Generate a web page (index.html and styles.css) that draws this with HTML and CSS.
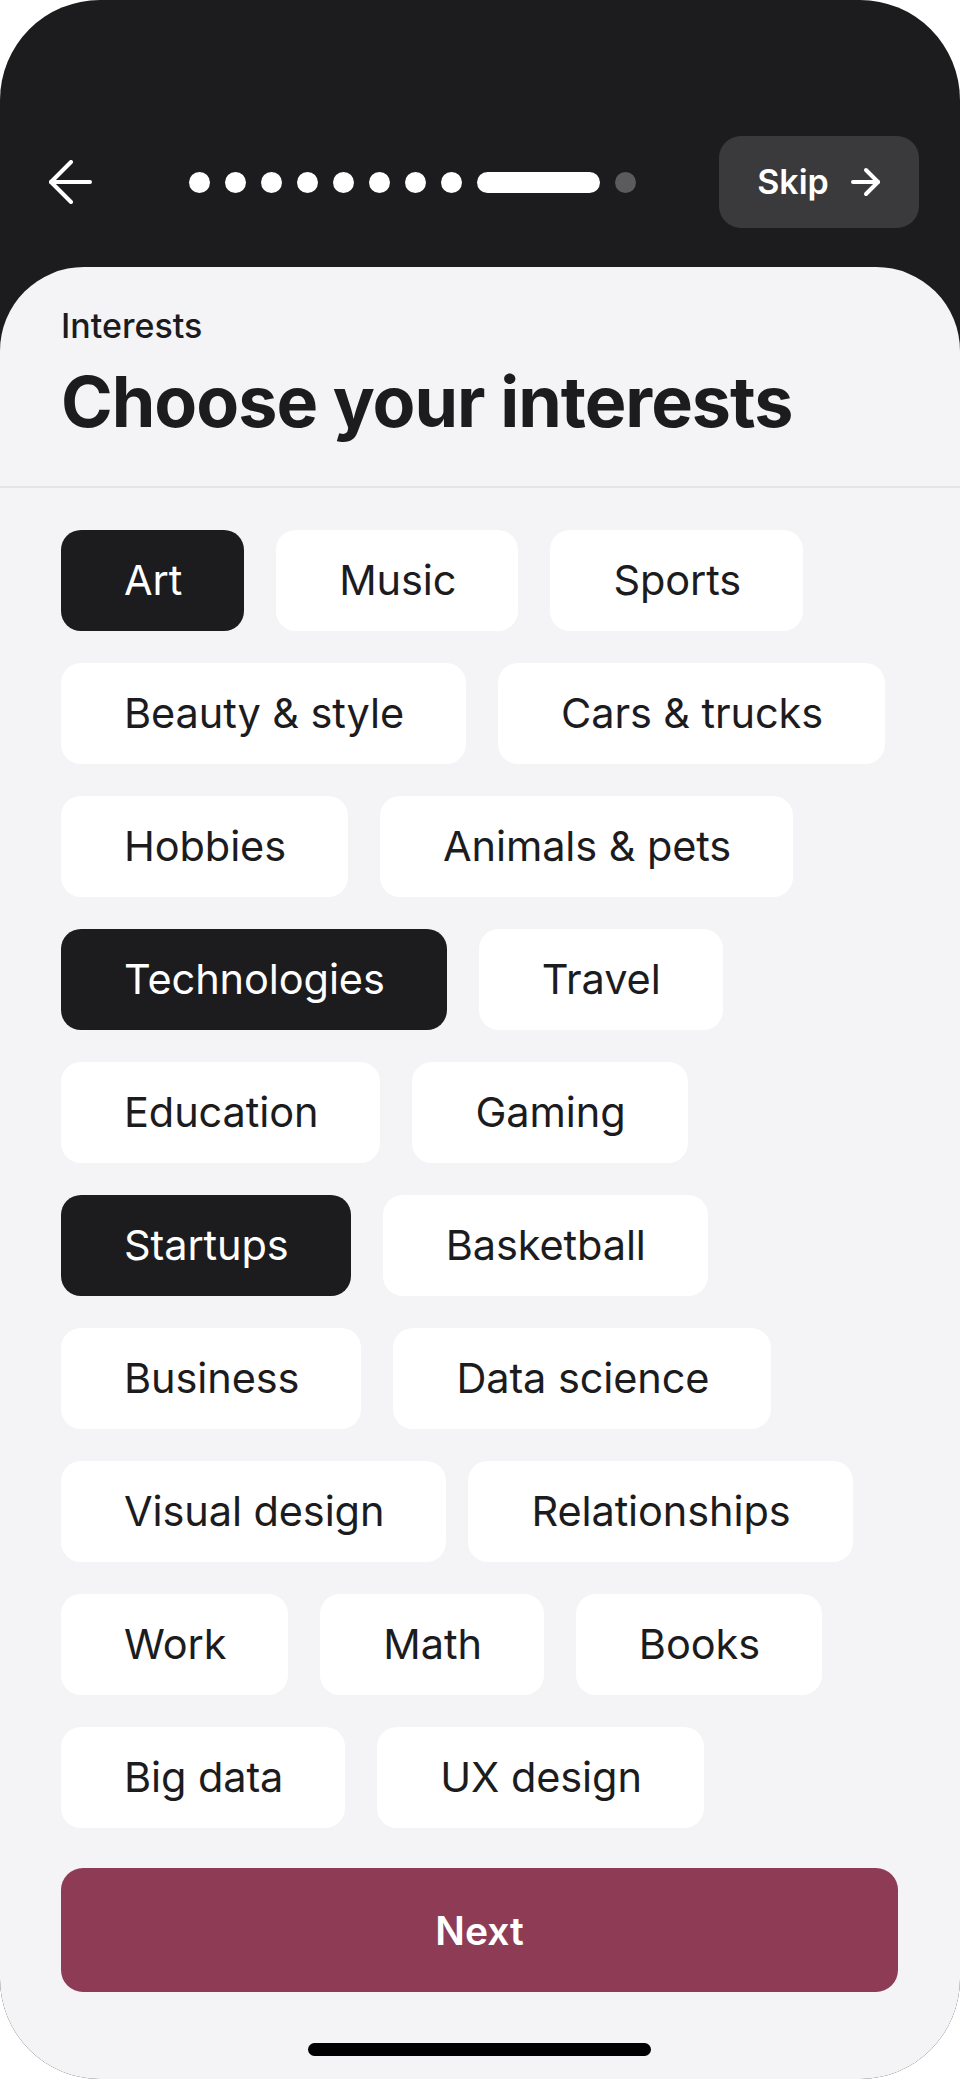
FILE: index.html
```html
<!DOCTYPE html>
<html lang="en">
<head>
<meta charset="utf-8">
<title>Choose your interests</title>
<link rel="stylesheet" href="styles.css">
</head>
<body>
<div class="phone">
  <header class="topbar">
    <button class="back" aria-label="Back">
      <svg width="44" height="44" viewBox="0 0 44 44" fill="none" stroke="#fff" stroke-width="4" stroke-linecap="round" stroke-linejoin="round">
        <path d="M22 2 L2 22 L22 42"/>
        <path d="M2 22 H41"/>
      </svg>
    </button>
    <div class="progress">
      <span class="dot"></span><span class="dot"></span><span class="dot"></span><span class="dot"></span>
      <span class="dot"></span><span class="dot"></span><span class="dot"></span><span class="dot"></span>
      <span class="pill"></span>
      <span class="dot dot-off"></span>
    </div>
    <button class="skip">
      <span>Skip</span>
      <svg width="30" height="30" viewBox="0 0 30 30" fill="none" stroke="#fff" stroke-width="4" stroke-linecap="round" stroke-linejoin="round">
        <path d="M2 15 H27"/>
        <path d="M15 3 L27 15 L15 27"/>
      </svg>
    </button>
  </header>

  <main class="sheet">
    <div class="sheet-head">
      <div class="eyebrow">Interests</div>
      <h1 class="title">Choose your interests</h1>
    </div>
    <div class="divider"></div>

    <div class="chips">
      <div class="row">
        <span class="chip chip-on">Art</span>
        <span class="chip">Music</span>
        <span class="chip">Sports</span>
      </div>
      <div class="row">
        <span class="chip">Beauty &amp; style</span>
        <span class="chip">Cars &amp; trucks</span>
      </div>
      <div class="row">
        <span class="chip">Hobbies</span>
        <span class="chip">Animals &amp; pets</span>
      </div>
      <div class="row">
        <span class="chip chip-on">Technologies</span>
        <span class="chip">Travel</span>
      </div>
      <div class="row">
        <span class="chip">Education</span>
        <span class="chip">Gaming</span>
      </div>
      <div class="row">
        <span class="chip chip-on">Startups</span>
        <span class="chip">Basketball</span>
      </div>
      <div class="row">
        <span class="chip">Business</span>
        <span class="chip">Data science</span>
      </div>
      <div class="row row-tight">
        <span class="chip">Visual design</span>
        <span class="chip">Relationships</span>
      </div>
      <div class="row">
        <span class="chip">Work</span>
        <span class="chip">Math</span>
        <span class="chip">Books</span>
      </div>
      <div class="row">
        <span class="chip">Big data</span>
        <span class="chip">UX design</span>
      </div>
    </div>

    <div class="footer">
      <button class="next">Next</button>
      <div class="home-indicator"></div>
    </div>
  </main>
</div>
</body>
</html>
```

FILE: styles.css
```css
* {
  box-sizing: border-box;
}

html, body {
  margin: 0;
  padding: 0;
  background: #ffffff;
}

body {
  font-family: Inter, "Noto Sans", "Liberation Sans", sans-serif;
  color: #1c1c1e;
}

button {
  font-family: inherit;
  border: 0;
  padding: 0;
  margin: 0;
  cursor: pointer;
}

.phone {
  width: 960px;
  height: 2079px;
  border-radius: 100px;
  overflow: hidden;
  background: #1c1c1e;
  display: flex;
  flex-direction: column;
}

/* ---------- top bar ---------- */
.topbar {
  height: 267px;
  flex: 0 0 267px;
  padding: 136px 41px 0 49px;
  display: flex;
  align-items: flex-start;
}

.back {
  width: 44px;
  height: 92px;
  background: transparent;
  display: flex;
  align-items: center;
  justify-content: flex-start;
}

.back svg {
  display: block;
}

.progress {
  margin-left: 96px;
  height: 92px;
  display: flex;
  align-items: center;
  gap: 15px;
}

.dot {
  width: 21px;
  height: 21px;
  border-radius: 50%;
  background: #ffffff;
}

.dot-off {
  background: #5b5b5e;
}

.pill {
  width: 123px;
  height: 21px;
  border-radius: 11px;
  background: #ffffff;
}

.skip {
  margin-left: auto;
  width: 200px;
  height: 92px;
  border-radius: 22px;
  background: #3a3a3c;
  color: #ffffff;
  font-size: 34px;
  font-weight: 600;
  display: flex;
  align-items: center;
  justify-content: center;
  gap: 22px;
  padding-bottom: 2px;
}

.skip svg {
  display: block;
  margin-top: 2px;
}

/* ---------- sheet ---------- */
.sheet {
  flex: 1;
  background: #f4f4f6;
  border-radius: 84px 84px 0 0;
  display: flex;
  flex-direction: column;
}

.sheet-head {
  padding: 39px 61px 42px 61px;
}

.eyebrow {
  font-size: 34px;
  line-height: 40px;
  font-weight: 500;
  margin-bottom: 14px;
}

.title {
  margin: 0;
  font-size: 70px;
  line-height: 84px;
  font-weight: 700;
  letter-spacing: -1px;
}

.divider {
  height: 2px;
  background: #e4e4e7;
}

/* ---------- chips ---------- */
.chips {
  padding: 42px 61px 0 61px;
  display: flex;
  flex-direction: column;
  gap: 32px;
}

.row {
  display: flex;
  gap: 32px;
}

.row-tight {
  gap: 22px;
}

.chip {
  height: 101px;
  padding: 0 62px 0 63px;
  border-radius: 20px;
  background: #ffffff;
  color: #1c1c1e;
  font-size: 41.5px;
  line-height: 101px;
  font-weight: 400;
  letter-spacing: -0.1px;
  white-space: nowrap;
}

.chip-on {
  background: #1c1c1e;
  color: #ffffff;
}

/* ---------- footer ---------- */
.footer {
  padding: 40px 62px 0 61px;
  display: flex;
  flex-direction: column;
  align-items: center;
}

.next {
  width: 100%;
  height: 124px;
  border-radius: 22px;
  background: #8e3c55;
  color: #ffffff;
  font-size: 39px;
  font-weight: 600;
}

.home-indicator {
  margin-top: 51px;
  width: 343px;
  height: 13px;
  border-radius: 7px;
  background: #000000;
}
```
